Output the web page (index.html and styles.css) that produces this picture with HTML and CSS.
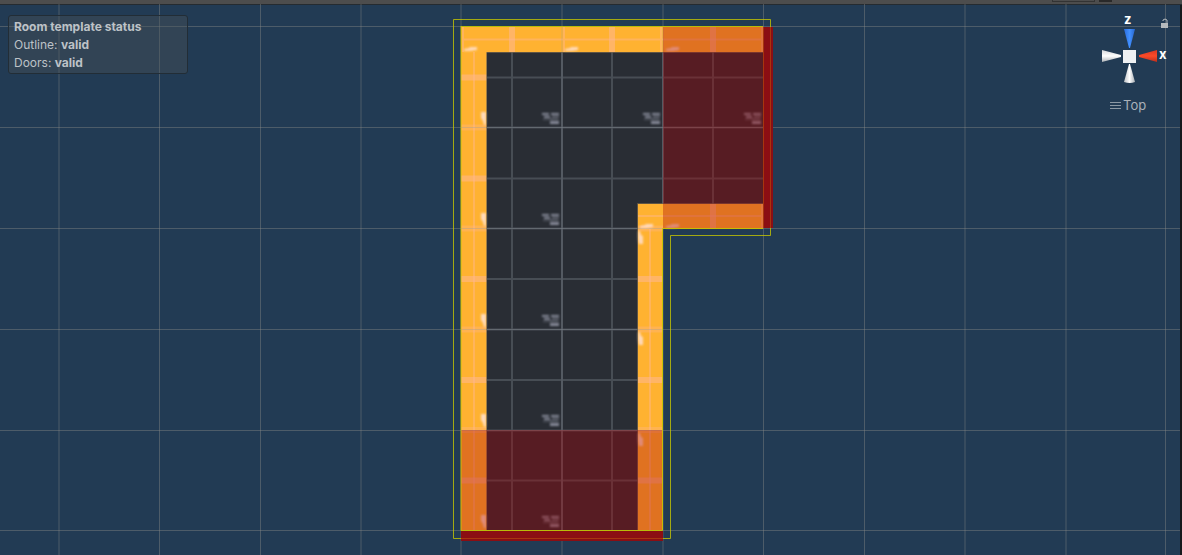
FILE: index.html
```html
<!DOCTYPE html>
<html lang="en">
<head>
<meta charset="utf-8">
<title>Scene view</title>
<link rel="stylesheet" href="styles.css">
</head>
<body>
<div class="editor">
  <header class="toolbar"><span class="tool-slot"></span><span class="tool-active"></span></header>
  <main class="scene">
    <svg class="drawing" aria-hidden="true">
      <defs>
        <filter id="soft" x="-30%" y="-30%" width="160%" height="160%"><feGaussianBlur stdDeviation="0.8"/></filter>
        <g id="label" fill="#a5a8ba" filter="url(#soft)">
          <path opacity=".75" d="M542 113h7v2h-7zM551 113h8v2h-8zM544 116h6v2h-6zM552 116h7v1h-7zM550 121h9v3h-9z"/>
          <path opacity=".4" d="M543 119h16v1h-16zM550 118h8v1h-8z"/>
        </g>
        <path id="side-mark" d="M481 112h5v13h-2l-1-4-2-3z" fill="#ffe2d4" opacity=".85" filter="url(#soft)"/>
        <path id="top-mark" d="M464 51v-2l5-1 1-1h7v3l-6 1z" fill="#ffe0d0" opacity=".85" filter="url(#soft)"/>
        <path id="inner-mark" d="M638 231l2 0 1 4 2 1v8h-4l-1-6z" fill="#ffe0d0" opacity=".85" filter="url(#soft)"/>
      </defs>
      <g class="world-grid">
        <path d="M59 4V555M159.500 4V555M260.500 4V555M361 4V555M461 4V555M562 4V555M663 4V555M763.500 4V555M864.500 4V555M965 4V555M1066 4V555M1165.500 4V555"/>
        <path d="M0 26.500H1180M0 127.500H1180M0 228.500H1180M0 329.500H1180M0 430.500H1180M0 530.500H1180"/>
      </g>
      <path class="wall" d="M461 27H763V229H663V530H461z"/>
      <g fill="none" stroke="#ffb79b">
        <path stroke-width="6" opacity=".5" d="M512 27V52M612 27V52M713 27V52M713 204V229M461 77.500H487M461 178.500H487M461 279H487M461 380H487M461 480.500H487M638 279H663M638 380H663M638 480.500H663"/>
        <path stroke-width="6" opacity=".3" d="M461 127.500H487M461 228.500H487M461 329.500H487M461 430H487M638 228.500H663M638 329.500H663M638 430H663"/>
        <path stroke-width="2" opacity=".4" d="M463 39.500H763M474 52V530M638 216H763M650 229V530M463 27V52M564 27V52M661 27V52M762 27V52M762 204V229"/>
      </g>
      <path class="floor" d="M487 52H763V204H638V530H487z"/>
      <g fill="none" stroke="#737980" opacity=".42">
        <path stroke-width="2" d="M512 52V530M562 52V530M612 52V530M663 52V204M713 52V204M487 77.500H763M487 127.500H763M487 178.500H763M487 228.500H638M487 279H638M487 329.500H638M487 380H638M487 430.500H638M487 480.500H638"/>
      </g>
      <g class="world-grid over">
        <path d="M562 27V530M663 27V204M461 127.500H763M461 228.500H663M461 329.500H663M461 430.500H663"/>
      </g>
      <use href="#label"/><use href="#label" x="101"/><use href="#label" x="202"/>
      <use href="#label" y="101"/><use href="#label" y="202"/><use href="#label" y="302"/><use href="#label" y="403"/>
      <use href="#side-mark"/><use href="#side-mark" y="101"/><use href="#side-mark" y="202"/><use href="#side-mark" y="302"/><use href="#side-mark" y="403"/>
      <use href="#top-mark"/><use href="#top-mark" x="101"/><use href="#top-mark" x="202"/><use href="#top-mark" x="176" y="177"/><use href="#top-mark" x="202" y="177"/>
      <use href="#inner-mark"/><use href="#inner-mark" y="101"/><use href="#inner-mark" y="202"/>
      <path d="M486.500 530V52.500H763M637.500 530V203.500H763" fill="none" stroke="#77664b" opacity=".7"/>
      <path class="door" d="M663 27H763V229H663zM461 430H663V530H461z"/>
      <path class="bounds inner" d="M461 26.500H763M763 228.500H662.500V530.500H461V26"/>
      <path class="bounds" d="M453.500 19.500H770.500V235.500H670.500V538.500H453.500z"/>
      <path class="door-edge" d="M763 27H773V228H763zM461 531H663V541H461z"/>
      <path class="bounds edge-line" d="M763.500 27V228M770.500 27V228M461 538.500H663"/>
    </svg>
    <section class="status">
      <h1>Room template status</h1>
      <p>Outline: <b>valid</b></p>
      <p>Doors: <b>valid</b></p>
    </section>
    <aside class="gizmo">
      <svg class="axes" width="74" height="86" viewBox="1098 7 74 86" role="img" aria-label="Scene orientation">
        <defs>
          <linearGradient id="blue"><stop stop-color="#2b6ddd"/><stop offset=".5" stop-color="#4290ff"/><stop offset="1" stop-color="#2866cc"/></linearGradient>
          <linearGradient id="white"><stop stop-color="#bfc2c6"/><stop offset=".5" stop-color="#fff"/><stop offset="1" stop-color="#a9aeb4"/></linearGradient>
          <linearGradient id="white-h" x2="0" y2="1"><stop stop-color="#d5d7da"/><stop offset=".5" stop-color="#fff"/><stop offset="1" stop-color="#abb0b5"/></linearGradient>
          <linearGradient id="red" x2="0" y2="1"><stop stop-color="#dc3822"/><stop offset=".5" stop-color="#fa4a28"/><stop offset="1" stop-color="#bb2e1c"/></linearGradient>
        </defs>
        <path fill="url(#blue)" d="M1124 29H1135L1130 48H1129z"/>
        <path fill="url(#white)" d="M1129 64H1130L1135 82Q1130 84 1124 82z"/>
        <path fill="url(#white-h)" d="M1102 50L1121 55V57L1102 62z"/>
        <path fill="url(#red)" d="M1157 50L1139 55V57L1157 62z"/>
        <path fill="#eff1f3" d="M1123 50H1136V63H1123z"/>
        <text x="1124" y="24">z</text><text x="1159" y="59">x</text>
      </svg>
      <button class="view" type="button"><svg width="11" height="9" aria-hidden="true"><path d="M0 1.500H11M0 4.500H11M0 7.500H11"/></svg>Top</button>
      <button class="lock" type="button" aria-label="Lock view"><svg width="9" height="11" aria-hidden="true"><path d="M1 5H8V10H1z" fill="#b5babd"/><path d="M3 3V2Q5 0 7 2V5" fill="none" stroke="#b5babd"/></svg></button>
    </aside>
  </main>
</div>
</body>
</html>
```
FILE: styles.css
```css
* { box-sizing: border-box; }
body { margin: 0; }
.editor { position: relative; display: flex; flex-direction: column; min-height: 100vh; overflow: hidden; background: #223b54; font-family: Inter, "Noto Sans", sans-serif; }
.toolbar { display: flex; justify-content: flex-end; gap: 4px; height: 5px; padding-right: 70px; background: #4d4d4d; border-bottom: 1px solid #252b30; }
.tool-slot { width: 43px; height: 2px; border: solid #333; border-width: 0 1px 1px; }
.tool-active { width: 13px; height: 2px; background: #292929; }
.scene { flex: 1; display: flex; justify-content: space-between; align-items: flex-start; padding: 2px 8px 0; border-right: 2px solid #171a1d; }
.drawing { position: absolute; inset: 0; width: 100%; height: 100%; pointer-events: none; }
.world-grid { fill: none; stroke: #8a8a88; stroke-opacity: .42; stroke-width: 1; }
.over { stroke: #999fa5; stroke-opacity: .35; }
.wall { fill: #ffb231; }
.floor { fill: #292d34; }
.door { fill: #a80006; fill-opacity: .36; }
.door-edge { fill: #8b0e13; }
.bounds { fill: none; stroke: #c5c500; stroke-opacity: .8; }
.inner { stroke-opacity: .9; }
.edge-line { stroke: #b64b0c; stroke-opacity: .65; }
.status { position: relative; width: 180px; margin-top: 8px; padding: 2px 5px 1px; border: 1px solid #222d36; border-radius: 3px; background: rgba(77, 83, 88, .38); color: #bdc2c7; font-size: 12px; line-height: 18px; }
.status h1, .status p { margin: 0; font-size: inherit; }
.gizmo { position: relative; display: flex; flex-direction: column; width: 74px; }
.axes { display: block; font: bold 13px Inter, sans-serif; fill: #fff; }
.view { display: flex; align-items: center; gap: 2px; margin: 3px 0 0 12px; padding: 0; border: 0; background: none; color: #a9b1b9; font: 13px/18px Inter, sans-serif; }
.view svg { fill: none; stroke: #8b98a4; }
.lock { position: absolute; top: 11px; right: 3px; padding: 0; border: 0; background: none; line-height: 0; }
```
